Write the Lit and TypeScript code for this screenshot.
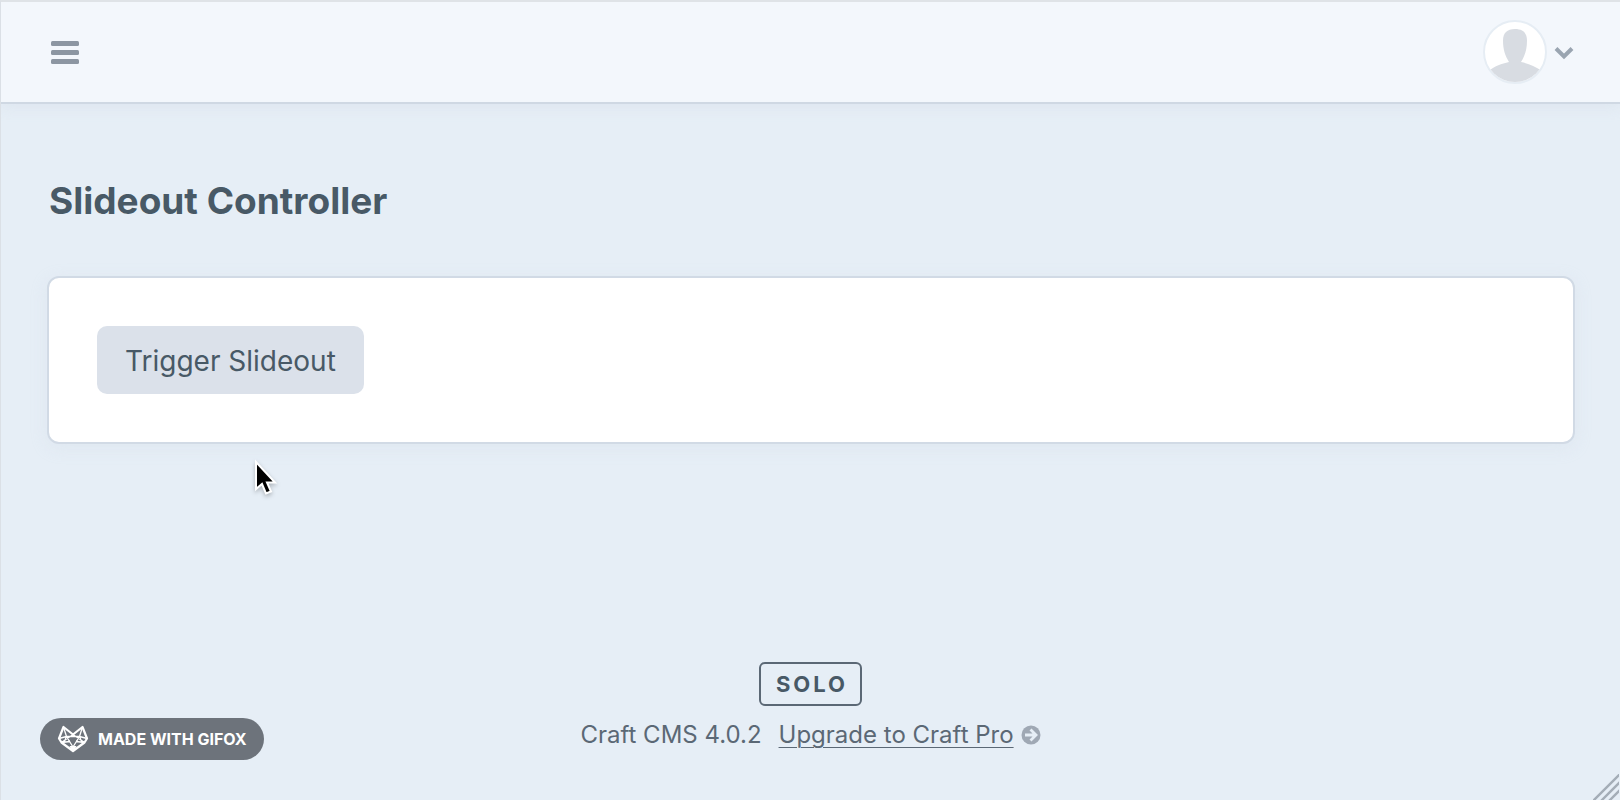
import { LitElement, html, css } from "lit";
import { customElement } from "lit/decorators.js";

@customElement("app-root")
export class AppRoot extends LitElement {
  static styles = css`
    :host {
      display: block;
      font-family: Inter, "Liberation Sans", sans-serif;
      color: #485966;
    }
    * {
      box-sizing: border-box;
    }
    .window {
      position: relative;
      display: flex;
      flex-direction: column;
      min-height: 100vh;
      background: #e6eef6;
      border-top: 2px solid #dfe3e7;
      border-left: 1px solid #dbe0e6;
      overflow: hidden;
    }
    .bar {
      display: flex;
      align-items: center;
      justify-content: space-between;
      height: 102px;
      padding: 0 46px 0 49px;
      background: #f3f7fc;
      border-bottom: 2px solid #cfd8e3;
      box-shadow: 0 4px 12px rgba(205, 216, 228, 0.3);
    }
    button {
      font: inherit;
      color: inherit;
      border: 0;
      margin: 0;
      padding: 0;
      background: none;
      cursor: pointer;
    }
    svg {
      display: block;
    }
    .account {
      display: flex;
      align-items: center;
      gap: 7px;
    }
    main {
      padding: 75px 45px 0 46px;
    }
    h1 {
      margin: 0;
      padding-left: 2px;
      font-size: 37px;
      line-height: 44px;
      font-weight: 700;
    }
    .pane {
      margin-top: 53px;
      padding: 48px;
      background: #fff;
      border: 2px solid #d1dae5;
      border-radius: 12px;
      box-shadow: 0 4px 16px rgba(205, 216, 228, 0.25);
    }
    .trigger {
      display: block;
      padding: 17px 28px 15px;
      border-radius: 10px;
      background: #dbe1ea;
      font-size: 28px;
      line-height: 36px;
    }
    footer {
      display: flex;
      flex-direction: column;
      align-items: center;
      gap: 13px;
      margin-top: auto;
      padding-bottom: 49px;
      color: #5b6875;
    }
    .edition {
      padding: 0 12px 0 15px;
      border: 2px solid #5b6875;
      border-radius: 6px;
      font-size: 22px;
      line-height: 40px;
      font-weight: 700;
      letter-spacing: 3px;
      color: #485966;
    }
    .version {
      display: flex;
      align-items: center;
      font-size: 24px;
      line-height: 32px;
    }
    .version a {
      margin: 0 7px 0 17px;
      color: inherit;
      text-decoration: underline;
      text-decoration-thickness: 1px;
      text-underline-offset: 4px;
    }
    .made {
      position: absolute;
      left: 39px;
      bottom: 40px;
      display: flex;
      align-items: center;
      gap: 9px;
      height: 42px;
      padding: 0 17px;
      border-radius: 21px;
      background: #6d737b;
      color: #fff;
      font-size: 16px;
      font-weight: 700;
      text-decoration: none;
    }
    .pointer {
      position: absolute;
      left: 252px;
      top: 456px;
      filter: drop-shadow(0 2px 2px rgba(0, 0, 0, 0.25));
    }
    .grip {
      position: absolute;
      right: 1px;
      bottom: 0;
    }
  `;

  render() {
    return html`
      <div class="window">
        <header class="bar">
          <button aria-label="Menu">
            <svg width="30" height="24" viewBox="0 0 30 24" fill="#8c96a2">
              <rect x="1" y="1" width="28" height="5" rx="1.5" />
              <rect x="1" y="10" width="28" height="5" rx="1.5" />
              <rect x="1" y="19" width="28" height="5" rx="1.5" />
            </svg>
          </button>
          <button class="account" aria-label="My account">
            <svg width="64" height="64" viewBox="0 0 64 64">
              <defs><clipPath id="face"><circle cx="32" cy="32" r="30" /></clipPath></defs>
              <circle cx="32" cy="32" r="31" fill="#fff" stroke="#e6edf4" stroke-width="2" />
              <path
                clip-path="url(#face)"
                fill="#d8dce2"
                d="M32 9c8 0 12 4 12 11.500 0 9-2 15-6 21.500 8 1.500 14.500 4.500 19.500 8v14H7V50c4.500-3.500 11.500-6.500 19-8C22 35.500 20 29.500 20 20.500 20 13 24 9 32 9z"
              />
            </svg>
            <svg width="20" height="16" viewBox="0 0 20 16" fill="none" stroke="#9aa5b1" stroke-width="4">
              <path d="M2 4.500 10 12.500 18 4.500" />
            </svg>
          </button>
        </header>

        <main>
          <h1>Slideout Controller</h1>
          <section class="pane">
            <button class="trigger">Trigger Slideout</button>
          </section>
        </main>

        <footer>
          <div class="edition">SOLO</div>
          <div class="version">
            <span>Craft CMS 4.0.2</span>
            <a href="#">Upgrade to Craft Pro</a>
            <svg width="20" height="20" viewBox="0 0 20 20">
              <circle cx="10" cy="10" r="9.500" fill="#9fa8b4" />
              <path d="M4 10h11M9.500 4.500 15 10 9.500 15.500" fill="none" stroke="#e6eef6" stroke-width="2.800" />
            </svg>
          </div>
        </footer>

        <a class="made" href="#">
          <svg width="32" height="28" viewBox="0 0 32 28" fill="none" stroke="#fff" stroke-linejoin="round">
            <path stroke-width="2.200" d="M6.500 2 16 9.500 25.500 2 30 13.500 27.500 17.500 16 26 4.500 17.500 2 13.500z" />
            <path
              stroke-width="1.300"
              d="M6.500 2 9.500 11.500h13L25.500 2M2 13.500l7.500-2M30 13.500l-7.500-2M9.500 11.500 16 22l6.500-10.500M4.500 17.500 16 9.500 27.500 17.500M4.500 17.500l8.500-1M27.500 17.500l-8.500-1M7 17.500 9.500 11.500M25 17.500l-2.500-6"
            />
            <path fill="#fff" d="M13 21.500h6L16 25.500z" />
          </svg>
          MADE WITH GIFOX
        </a>

        <svg class="pointer" width="26" height="42" viewBox="0 0 26 42">
          <path
            d="M3 4v27l6-5 4 9.500 5-2-4-9h8z"
            fill="#000"
            stroke="#fff"
            stroke-width="2"
          />
        </svg>
        <svg class="grip" width="26" height="26" viewBox="0 0 26 26" stroke="#a4adb7" stroke-width="2.400">
          <path d="M0 27 27 0M8 27 27 8M16 27 27 16" />
        </svg>
      </div>
    `;
  }
}
